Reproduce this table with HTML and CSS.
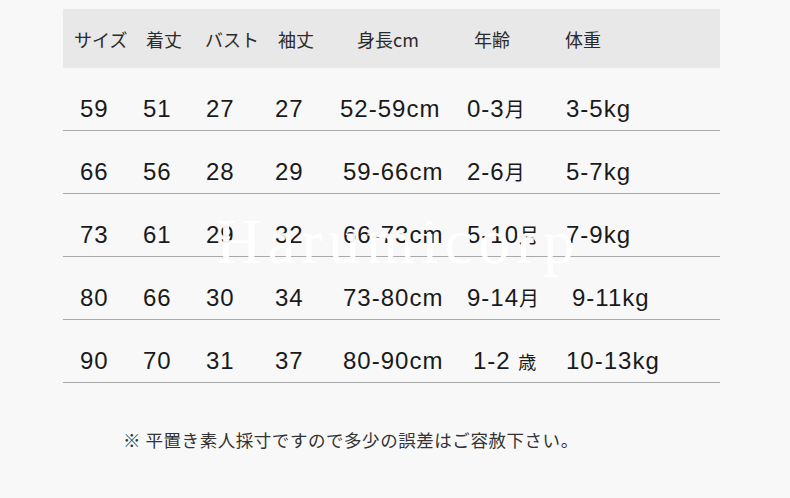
FILE: index.html
```html
<!DOCTYPE html>
<html lang="ja">
<head>
<meta charset="utf-8">
<title>サイズ表</title>
<link rel="stylesheet" href="styles.css">
</head>
<body>
<div class="page">
  <div class="table">
    <div class="head">
      <span>サイズ</span><span>着丈</span><span>バスト</span><span>袖丈</span><span>身長cm</span><span>年齢</span><span>体重</span>
    </div>
    <div class="row">
      <span>59</span><span>51</span><span>27</span><span>27</span><span class="c5a">52-59cm</span><span>0-3<span class="jp">月</span></span><span>3-5kg</span>
    </div>
    <div class="row">
      <span>66</span><span>56</span><span>28</span><span>29</span><span>59-66cm</span><span>2-6<span class="jp">月</span></span><span>5-7kg</span>
    </div>
    <div class="row">
      <span>73</span><span>61</span><span>29</span><span>32</span><span>66-73cm</span><span>5-10<span class="jp">月</span></span><span>7-9kg</span>
    </div>
    <div class="row">
      <span>80</span><span>66</span><span>30</span><span>34</span><span>73-80cm</span><span>9-14<span class="jp">月</span></span><span class="shift">9-11kg</span>
    </div>
    <div class="row">
      <span>90</span><span>70</span><span>31</span><span>37</span><span>80-90cm</span><span class="shift">1-2 <span class="jp small">歳</span></span><span>10-13kg</span>
    </div>
    <div class="watermark">Harumicorp</div>
  </div>
  <p class="note">※ 平置き素人採寸ですので多少の誤差はご容赦下さい。</p>
</div>
</body>
</html>
```
FILE: styles.css
```css
html, body {
  margin: 0;
  padding: 0;
  background: #f8f8f8;
}
.page {
  width: 790px;
  height: 498px;
  padding-top: 9px;
  box-sizing: border-box;
}
.table {
  position: relative;
  margin-left: 63px;
  width: 657px;
}
.head {
  display: grid;
  grid-template-columns: 72px 59px 73px 79px 117px 91px 1fr;
  align-items: center;
  height: 59px;
  padding-left: 11px;
  background: #e8e8e8;
  font-family: "Noto Sans CJK JP", "Noto Sans", sans-serif;
  font-size: 18px;
  color: #2a2a2a;
  line-height: 1;
}
.row {
  display: grid;
  grid-template-columns: 63px 63px 69px 68px 124px 99px 1fr;
  align-items: start;
  box-sizing: border-box;
  height: 63px;
  padding-top: 29px;
  padding-left: 17px;
  border-bottom: 1px solid #a9a9a9;
  font-family: "Liberation Sans", "Noto Sans CJK JP", sans-serif;
  font-size: 24px;
  line-height: 24px;
  letter-spacing: 1px;
  color: #1a1a1a;
}
.row span { white-space: nowrap; }
.c5a { margin-left: -3px; }
.shift { margin-left: 6px; }
.jp {
  font-family: "Noto Sans CJK JP", sans-serif;
  font-size: 20px;
  letter-spacing: 0;
}
.small { font-size: 18px; }
.watermark {
  position: absolute;
  left: 153px;
  top: 202px;
  font-family: "Liberation Serif", serif;
  font-size: 63px;
  line-height: 63px;
  letter-spacing: 6px;
  color: rgba(255, 255, 255, 0.94);
  pointer-events: none;
}
.note {
  margin: 44px 0 0 123px;
  font-family: "Noto Sans CJK JP", sans-serif;
  font-size: 17.5px;
  line-height: 25px;
  letter-spacing: 0.55px;
  color: #333;
}
```
